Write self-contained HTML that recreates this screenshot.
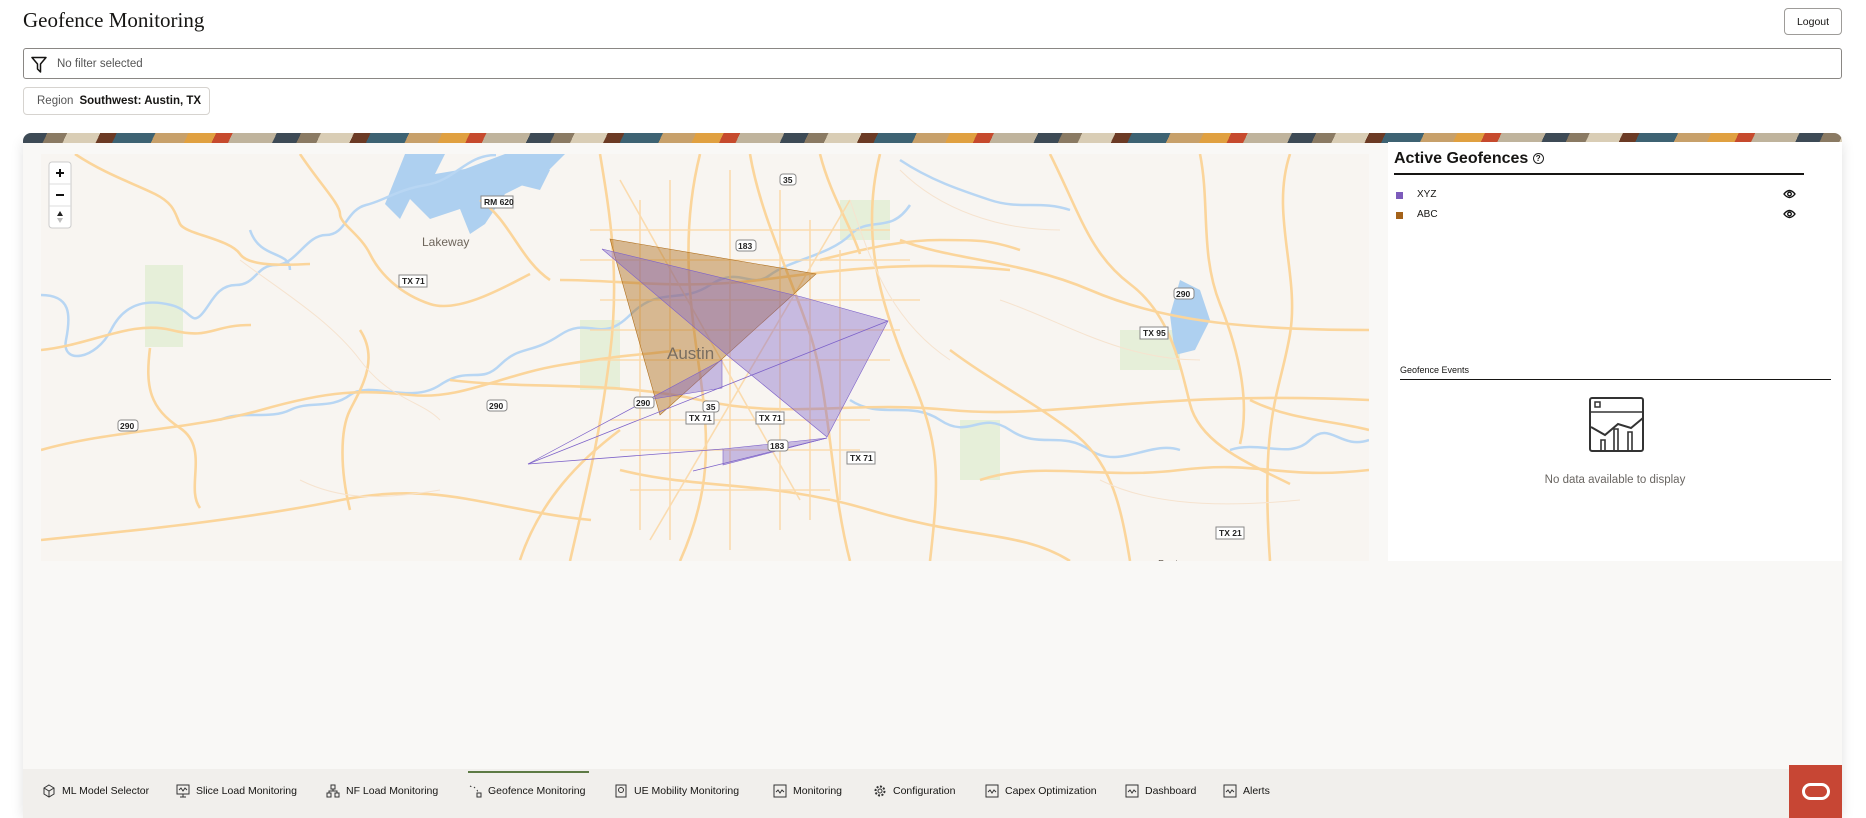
<!DOCTYPE html>
<html><head><meta charset="utf-8"><style>
*{box-sizing:border-box;margin:0;padding:0}
body{width:1866px;height:818px;overflow:hidden;background:#fff;font-family:"Liberation Sans",sans-serif;position:relative;color:#161513}
.abs{position:absolute}
h1{position:absolute;left:23px;top:8px;font-family:"Liberation Serif",serif;font-weight:normal;font-size:21px;color:#161513}
.logout{left:1784px;top:8px;width:58px;height:27px;border:1px solid #9e9c99;border-radius:4px;font-size:10.5px;display:flex;align-items:center;justify-content:center;background:#fff}
.filter{left:23px;top:48px;width:1819px;height:31px;border:1px solid #8a8784;border-radius:3px;background:#fff;font-size:11.5px;color:#555;display:flex;align-items:center;padding-left:33px}
.chip{left:23px;top:87px;width:187px;height:28px;border:1px solid #d6d3cf;border-radius:4px;background:#fff;font-size:11.5px;display:flex;align-items:center;padding-left:13px}
.banner{left:23px;top:133px;width:1819px;height:10px;border-radius:8px 8px 0 0;background:repeating-linear-gradient(115deg,#3d4a55 0 22px,#8a7a63 22px 40px,#d9cdb5 40px 70px,#6b3a24 70px 85px,#3d6272 85px 120px,#c7a06a 120px 150px,#e0a040 150px 175px,#c64a2d 175px 190px,#bfb39c 190px 230px)}
.panel{left:23px;top:142px;width:1819px;height:676px;background:#f9f8f6;box-shadow:0 0 12px rgba(0,0,0,.12)}
.right{left:1388px;top:142px;width:454px;height:419px;background:#fff}
.nav{left:23px;top:769px;width:1819px;height:49px;background:#f1efec;font-size:10.5px}
.ni{position:absolute;top:15px;display:flex;align-items:center;gap:6px;white-space:nowrap}
.ni svg{width:14px;height:14px}
</style></head><body>
<h1>Geofence Monitoring</h1>
<div class="abs logout">Logout</div>
<div class="abs filter"><svg class="abs" style="left:7px;top:7px" width="16" height="17" viewBox="0 0 16 17"><path d="M1 1.5h14L9.5 8v8L6.5 13V8z" fill="none" stroke="#161513" stroke-width="1.5" stroke-linejoin="round"/></svg>No filter selected</div>
<div class="abs chip"><span style="color:#555;margin-right:6px">Region</span><b style="font-weight:600">Southwest: Austin, TX</b></div>
<div class="abs panel"></div>
<div class="abs banner"></div>
<svg class="abs" style="left:41px;top:154px" width="1328" height="407" viewBox="41 154 1328 407">
<rect x="41" y="154" width="1328" height="407" fill="#f8f5f1"/>
<g fill="#e6efd9"><rect x="145" y="265" width="38" height="82"/><rect x="1120" y="330" width="60" height="40"/><rect x="840" y="200" width="50" height="40"/><rect x="580" y="320" width="40" height="70"/><rect x="960" y="420" width="40" height="60"/></g>
<g fill="#aed0f0"><path d="M405 154h40l-10 20 30-5 40-15h60l-20 20-40 20-20 30-15 10-10-25-30 10-20-20-10 20-15-15z"/><path d="M520 160l30 10-10 20-20-5z"/><path d="M1180 280l20 10 10 30-15 30-20 5-5-40z"/></g>
<g fill="none" stroke="#b8d6f3" stroke-width="2.5"><path d="M41 295c30 0 30 20 25 45s30 20 45-10 40-30 60-25 20 20 30 10 15-30 35-30 20-20 40-20 30-30 50-30 20-25 40-30 30-15 60-20 40-30 70-30"/><path d="M220 420c20-10 50 0 70-10s40 0 60-15 60 10 90-10 40 0 60-20 30-10 60-30 40 10 70-20 50-10 80-30 40 5 60-10 60-20 80-40 40 0 60-30"/><path d="M850 400c30 20 60 0 90 20s40-10 70 10 50 0 80 20 60-10 90 0"/><path d="M250 230c10 30 40 20 40 40"/><path d="M900 160c30 20 60 30 90 40s50 0 80 10"/><path d="M1230 450c30-10 60 10 80-10s30 10 59 0"/></g>
<g fill="none" stroke="#fbd59b" stroke-width="2.6"><path d="M75 154c30 20 60 30 80 40s20 20 25 30 50 15 60 30 60 10 70 10"/><path d="M41 350c50-5 90-30 130-20s40-5 80-5"/><path d="M150 348c-5 40 0 60 30 80s5 60 20 80"/><path d="M41 450c70-20 150-20 220-40s100-20 150-15 90-20 150-30 80-10 120-15"/><path d="M300 154c20 30 40 50 40 60s20 20 30 40 30 40 60 50 80-20 100-30"/><path d="M360 330c20 30 0 60-10 80s-10 60 0 100"/><path d="M600 154c10 60 20 120 10 200s-20 120-40 207"/><path d="M700 154c-20 80-10 150 0 220s10 120-20 187"/><path d="M750 154c10 60 40 120 60 180s20 150 40 227"/><path d="M560 280c60 0 120 10 200 0s150-20 250-10"/><path d="M450 380c80 10 160 0 250 20s150 0 250 10 200-20 419-10"/><path d="M820 260c40-10 80-20 120-20s50 0 80 10"/><path d="M1050 154c30 60 40 100 80 130s50 80 60 120 60 60 100 80"/><path d="M900 240c50 20 120 20 190 50s150 40 279 40"/><path d="M880 154c-20 80 0 150 30 220s30 100 20 187"/><path d="M950 350c40 30 80 50 120 80s50 70 60 131"/><path d="M1200 154c10 50 0 100 20 150s30 100 20 140"/><path d="M41 540c100-10 200-20 300-40s150 10 250 20"/><path d="M620 470c80 20 150 10 250 40s150 20 200 51"/><path d="M1250 400c40 20 80 20 119 30"/><path d="M480 200c30 20 40 60 70 80"/><path d="M1290 154c-20 60 10 120 0 180s-30 80-20 227"/><path d="M980 480c60-20 120 0 200-10s100 10 189 0"/><path d="M520 560c20-60 60-100 100-130"/><path d="M820 154c10 40 30 70 40 100"/></g>
<g fill="none" stroke="#fbd9a8" stroke-width="1.6" opacity=".9">
<path d="M640 200v330M670 180v360M730 170v380M780 190v340M810 220v300M840 250v250"/>
<path d="M590 230h300M580 260h330M600 300h320M590 330h310M600 360h290M610 420h260M620 450h240M630 490h200"/>
<path d="M620 180l180 320M850 200l-200 340"/>
</g>
<g fill="none" stroke="#f6e3cf" stroke-width="1"><path d="M240 260c40 30 90 60 120 100s60 40 80 60"/><path d="M850 200c20 60 40 120 100 160"/><path d="M1000 300c60 20 120 60 200 60"/><path d="M300 480c40 20 80 20 140 10"/><path d="M1100 480c40 20 100 30 200 20"/><path d="M900 170c40 40 100 60 160 60"/></g>
<polygon points="610,239 816,274 660,415" fill="#b06f1c" fill-opacity=".45" stroke="#b06f1c" stroke-width=".6"/>
<g fill="#7d62c9" fill-opacity=".4" stroke="#7d62c9" stroke-width=".6"><polygon points="602,249 802,297 888,321 827,437 727,355"/><polygon points="528,464 722,360 722,388 647,400"/><polygon points="723,449 723,465 827,438"/></g>
<g stroke="#7d62c9" stroke-width=".8"><line x1="528" y1="464" x2="888" y2="321"/><line x1="528" y1="464" x2="723" y2="449"/><line x1="693" y1="471" x2="827" y2="438"/></g>
<g font-family="Liberation Sans,sans-serif"><text x="667" y="359" font-size="17" fill="#7a6e60">Austin</text><text x="422" y="246" font-size="12" fill="#6e655b">Lakeway</text></g>
<g font-size="8.5" font-weight="bold" font-family="Liberation Sans,sans-serif" fill="#222">
<g><rect x="481" y="196" width="32" height="12" fill="#fff" stroke="#888"/><text x="484" y="205">RM 620</text></g>
<g><rect x="399" y="275" width="28" height="12" fill="#fff" stroke="#888"/><text x="402" y="284">TX 71</text></g>
<g><rect x="686" y="412" width="28" height="12" fill="#fff" stroke="#888"/><text x="689" y="421">TX 71</text></g>
<g><rect x="756" y="412" width="28" height="12" fill="#fff" stroke="#888"/><text x="759" y="421">TX 71</text></g>
<g><rect x="847" y="452" width="28" height="12" fill="#fff" stroke="#888"/><text x="850" y="461">TX 71</text></g>
<g><rect x="1140" y="327" width="28" height="12" fill="#fff" stroke="#888"/><text x="1143" y="336">TX 95</text></g>
<g><rect x="1216" y="527" width="28" height="12" fill="#fff" stroke="#888"/><text x="1219" y="536">TX 21</text></g>
<g><rect x="118" y="420" width="20" height="11" rx="3" fill="#fff" stroke="#888"/><text x="120" y="429">290</text></g>
<g><rect x="487" y="400" width="20" height="11" rx="3" fill="#fff" stroke="#888"/><text x="489" y="409">290</text></g>
<g><rect x="634" y="397" width="20" height="11" rx="3" fill="#fff" stroke="#888"/><text x="636" y="406">290</text></g>
<g><rect x="1174" y="288" width="20" height="11" rx="3" fill="#fff" stroke="#888"/><text x="1176" y="297">290</text></g>
<g><rect x="736" y="240" width="20" height="11" rx="3" fill="#fff" stroke="#888"/><text x="738" y="249">183</text></g>
<g><rect x="768" y="440" width="20" height="11" rx="3" fill="#fff" stroke="#888"/><text x="770" y="449">183</text></g>
<g><rect x="780" y="174" width="16" height="11" rx="3" fill="#fff" stroke="#888"/><text x="783" y="183">35</text></g>
<g><rect x="703" y="401" width="16" height="11" rx="3" fill="#fff" stroke="#888"/><text x="706" y="410">35</text></g>
</g>
<text x="1158" y="567" font-size="10" fill="#6e655b" font-family="Liberation Sans,sans-serif">Bastrop</text>
<g><rect x="49" y="162" width="22" height="66" rx="3" fill="#fff" stroke="#ccc"/><line x1="49" y1="184" x2="71" y2="184" stroke="#ddd"/><line x1="49" y1="206" x2="71" y2="206" stroke="#ddd"/><path d="M56 173h8M60 169v8M56 195h8" stroke="#111" stroke-width="2"/><path d="M60 211l-3 5h6z" fill="#222"/><path d="M60 223l-3-5h6z" fill="#bbb"/></g>
</svg>
<div class="abs right"></div>
<div class="abs" style="left:1394px;top:150px;font-size:16px;font-weight:bold">Active Geofences <span style="display:inline-block;width:11px;height:11px;border:1.3px solid #222;border-radius:50%;font-size:8px;line-height:9px;text-align:center;vertical-align:2px">?</span></div>
<div class="abs" style="left:1394px;top:173px;width:410px;height:1.5px;background:#161513"></div>
<div class="abs" style="left:1396px;top:192px;width:7px;height:7px;background:#7c5bbb"></div>
<div class="abs" style="left:1417px;top:189px;font-size:10px">XYZ</div>
<div class="abs" style="left:1396px;top:212px;width:7px;height:7px;background:#a4621a"></div>
<div class="abs" style="left:1417px;top:209px;font-size:10px">ABC</div>
<svg class="abs" style="left:1783px;top:189px" width="13" height="10" viewBox="0 0 13 10"><path d="M1 5q5.5-7 11 0q-5.5 7-11 0z" fill="none" stroke="#111" stroke-width="1.4"/><circle cx="6.5" cy="5" r="1.8" fill="none" stroke="#111" stroke-width="1.3"/></svg>
<svg class="abs" style="left:1783px;top:209px" width="13" height="10" viewBox="0 0 13 10"><path d="M1 5q5.5-7 11 0q-5.5 7-11 0z" fill="none" stroke="#111" stroke-width="1.4"/><circle cx="6.5" cy="5" r="1.8" fill="none" stroke="#111" stroke-width="1.3"/></svg>
<div class="abs" style="left:1400px;top:365px;font-size:9px">Geofence Events</div>
<div class="abs" style="left:1400px;top:379px;width:431px;height:1.3px;background:#161513"></div>
<svg class="abs" style="left:1589px;top:397px" width="55" height="55" viewBox="0 0 55 55"><rect x="1" y="1" width="53" height="53" rx="2" fill="none" stroke="#333" stroke-width="2"/><line x1="1" y1="15" x2="54" y2="15" stroke="#333" stroke-width="1.5"/><rect x="6" y="5" width="5" height="5" fill="none" stroke="#333" stroke-width="1.5"/><path d="M2 30l14 8 13-11 13 4 12-10" fill="none" stroke="#333" stroke-width="2"/><path d="M12 54V43h4v11M25 54V32h4v22M39 54V35h4v19" fill="none" stroke="#333" stroke-width="1.6"/></svg>
<div class="abs" style="left:1540px;top:474px;width:150px;text-align:center;font-size:11.5px;color:#6a6662">No data available to display</div>
<div class="abs nav">
<div class="abs" style="left:445px;top:2px;width:121px;height:2px;background:#5d7a45"></div>
<div class="ni" style="left:19px"><svg viewBox="0 0 14 14"><path d="M7 1l5 3v6l-5 3-5-3V4z M2 4l5 3 5-3 M7 7v6" fill="none" stroke="#333"/></svg>ML Model Selector</div>
<div class="ni" style="left:153px"><svg viewBox="0 0 14 14"><rect x="1" y="1" width="12" height="9" fill="none" stroke="#333"/><path d="M3 6l2-2 2 3 2-3 2 2M7 10v3M4 13h6" fill="none" stroke="#333"/></svg>Slice Load Monitoring</div>
<div class="ni" style="left:303px"><svg viewBox="0 0 14 14"><rect x="5" y="1" width="4" height="4" fill="none" stroke="#333"/><rect x="1" y="9" width="4" height="4" fill="none" stroke="#333"/><rect x="9" y="9" width="4" height="4" fill="none" stroke="#333"/><path d="M7 5v2M3 9V7h8v2" fill="none" stroke="#333"/></svg>NF Load Monitoring</div>
<div class="ni" style="left:445px"><svg viewBox="0 0 14 14"><path d="M2 2l2 1M6 3l2 2M9 6l1 2" stroke="#333" stroke-dasharray="1.5 1.5"/><rect x="9" y="9" width="4" height="4" fill="none" stroke="#333"/></svg>Geofence Monitoring</div>
<div class="ni" style="left:591px"><svg viewBox="0 0 14 14"><rect x="2" y="1" width="10" height="12" fill="none" stroke="#333"/><circle cx="7" cy="6" r="2.5" fill="none" stroke="#333"/></svg>UE Mobility Monitoring</div>
<div class="ni" style="left:750px"><svg viewBox="0 0 14 14"><rect x="1" y="1" width="12" height="12" fill="none" stroke="#333"/><path d="M3 8l2-2 2 3 2-3 2 2" fill="none" stroke="#333"/></svg>Monitoring</div>
<div class="ni" style="left:850px"><svg viewBox="0 0 14 14"><circle cx="7" cy="7" r="4.5" fill="none" stroke="#333" stroke-width="2" stroke-dasharray="2 1.5"/><circle cx="7" cy="7" r="2" fill="none" stroke="#333"/></svg>Configuration</div>
<div class="ni" style="left:962px"><svg viewBox="0 0 14 14"><rect x="1" y="1" width="12" height="12" fill="none" stroke="#333"/><path d="M3 8l2-2 2 3 2-3 2 2" fill="none" stroke="#333"/></svg>Capex Optimization</div>
<div class="ni" style="left:1102px"><svg viewBox="0 0 14 14"><rect x="1" y="1" width="12" height="12" fill="none" stroke="#333"/><path d="M3 8l2-2 2 3 2-3 2 2" fill="none" stroke="#333"/></svg>Dashboard</div>
<div class="ni" style="left:1200px"><svg viewBox="0 0 14 14"><rect x="1" y="1" width="12" height="12" fill="none" stroke="#333"/><path d="M3 8l2-2 2 3 2-3 2 2" fill="none" stroke="#333"/></svg>Alerts</div>
</div>
<div class="abs" style="left:1789px;top:765px;width:53px;height:53px;background:#c74634;display:flex;align-items:center;justify-content:center"><div style="width:28px;height:17px;border:3.5px solid #fff;border-radius:9px"></div></div>
</body></html>
